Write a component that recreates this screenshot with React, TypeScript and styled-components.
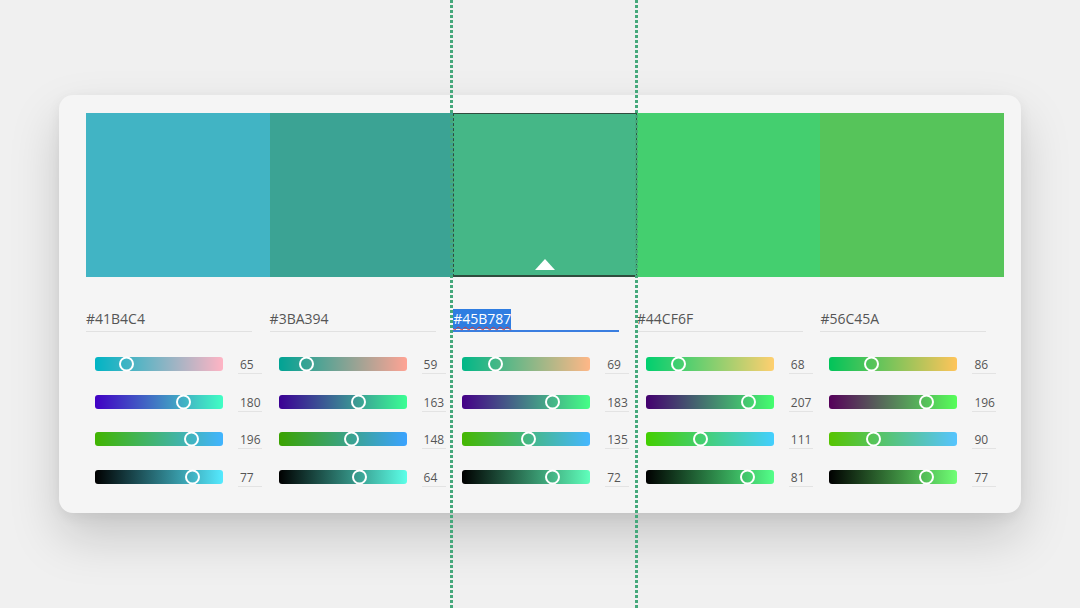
import React from "react";
import styled, { createGlobalStyle } from "styled-components";

const Global = createGlobalStyle`
  html, body { margin: 0; padding: 0; background: #f0f0f0; }
  body { font-family: "Open Sans", "Noto Sans", sans-serif; width: 1080px; height: 608px; overflow: hidden; }
`;

type RGB = [number, number, number];

const colors: { hex: string; rgb: RGB }[] = [
  { hex: "#41B4C4", rgb: [65, 180, 196] },
  { hex: "#3BA394", rgb: [59, 163, 148] },
  { hex: "#45B787", rgb: [69, 183, 135] },
  { hex: "#44CF6F", rgb: [68, 207, 111] },
  { hex: "#56C45A", rgb: [86, 196, 90] },
];

const SELECTED = 2;

const Page = styled.div`
  position: relative;
  width: 1080px;
  height: 608px;
  padding: 95px 0 0 59px;
  box-sizing: border-box;
`;

const Card = styled.div`
  width: 962px;
  height: 418px;
  box-sizing: border-box;
  padding: 18px 17px 0 27px;
  background: #f5f5f5;
  border-radius: 14px;
  box-shadow: 0 24px 50px rgba(0, 0, 0, 0.17), 0 4px 14px rgba(0, 0, 0, 0.06);
`;

const Swatches = styled.div`
  display: grid;
  grid-template-columns: repeat(5, 1fr);
  height: 164px;
`;

const Swatch = styled.div<{ $bg: string; $selected?: boolean }>`
  position: relative;
  background: ${(p) => p.$bg};
  box-sizing: border-box;
  ${(p) =>
    p.$selected &&
    `border-top: 1px solid #2f4d3e;
     border-bottom: 2px solid #2f4d3e;
     border-left: 1px dashed #2f4d3e;
     border-right: 1px dashed #2f4d3e;`}
`;

const Caret = styled.div`
  position: absolute;
  left: 50%;
  bottom: 5px;
  transform: translateX(-50%);
  width: 0;
  height: 0;
  border-left: 10px solid transparent;
  border-right: 10px solid transparent;
  border-bottom: 11px solid #ffffff;
`;

const Columns = styled.div`
  display: grid;
  grid-template-columns: repeat(5, 1fr);
  margin-top: 31px;
`;

const Column = styled.div`
  display: flex;
  flex-direction: column;
`;

const HexField = styled.div<{ $active?: boolean }>`
  width: 166px;
  height: 24px;
  box-sizing: border-box;
  font-size: 14px;
  line-height: 22px;
  color: #555;
  border-bottom: ${(p) => (p.$active ? "2px solid #3a7ee0" : "1px solid #e1e1e1")};
`;

const Selected = styled.span`
  display: inline-block;
  line-height: 20px;
  background: #2f7de1;
  color: #ffffff;
  text-decoration: underline wavy #d23b3b;
  text-underline-offset: 2px;
  text-decoration-thickness: 1px;
`;

const Sliders = styled.div`
  display: flex;
  flex-direction: column;
  gap: 23.7px;
  margin-top: 25px;
  padding-left: 9px;
`;

const Row = styled.div`
  display: flex;
  align-items: center;
  gap: 15px;
  height: 14px;
`;

const Track = styled.div<{ $from: string; $to: string }>`
  position: relative;
  width: 128px;
  height: 14px;
  border-radius: 3px;
  background: linear-gradient(to right, ${(p) => p.$from}, ${(p) => p.$to});
`;

const Thumb = styled.div`
  position: absolute;
  top: 50%;
  width: 15px;
  height: 15px;
  box-sizing: border-box;
  border: 2px solid #ffffff;
  border-radius: 50%;
  transform: translate(-9px, -50%);
`;

const Value = styled.div`
  width: 24px;
  height: 17px;
  box-sizing: border-box;
  padding-left: 2px;
  font-size: 12px;
  line-height: 16px;
  color: #555;
  border-bottom: 1px solid #e3e3e3;
  margin-top: 3px;
`;

const Guide = styled.div<{ $x: number }>`
  position: absolute;
  top: 0;
  bottom: 0;
  left: ${(p) => p.$x}px;
  width: 3px;
  background: repeating-linear-gradient(
    to bottom,
    #45a87b 0px,
    #45a87b 3px,
    transparent 3px,
    transparent 5px
  );
  pointer-events: none;
`;

const rgb = (c: number[]) => `rgb(${c.map((v) => Math.round(Math.min(255, v))).join(",")})`;

function slidersFor(c: RGB) {
  const [r, g, b] = c;
  const max = Math.max(r, g, b);
  const bright = Math.round((max / 255) * 100);
  const full = c.map((v) => (v * 255) / max);
  return [
    { from: rgb([0, g, b]), to: rgb([255, g, b]), pos: r / 255, val: r },
    { from: rgb([r, 0, b]), to: rgb([r, 255, b]), pos: g / 255, val: g },
    { from: rgb([r, g, 0]), to: rgb([r, g, 255]), pos: b / 255, val: b },
    { from: "#000000", to: rgb(full), pos: bright / 100, val: bright },
  ];
}

export default function App() {
  return (
    <>
      <Global />
      <Page>
        <Card>
          <Swatches>
            {colors.map((c, i) => (
              <Swatch key={c.hex} $bg={c.hex} $selected={i === SELECTED}>
                {i === SELECTED && <Caret />}
              </Swatch>
            ))}
          </Swatches>
          <Columns>
            {colors.map((c, i) => (
              <Column key={c.hex}>
                <HexField $active={i === SELECTED}>
                  {i === SELECTED ? <Selected>{c.hex}</Selected> : c.hex}
                </HexField>
                <Sliders>
                  {slidersFor(c.rgb).map((s, j) => (
                    <Row key={j}>
                      <Track $from={s.from} $to={s.to}>
                        <Thumb style={{ left: `${s.pos * 100}%` }} />
                      </Track>
                      <Value>{s.val}</Value>
                    </Row>
                  ))}
                </Sliders>
              </Column>
            ))}
          </Columns>
        </Card>
        <Guide $x={450} />
        <Guide $x={635} />
      </Page>
    </>
  );
}
